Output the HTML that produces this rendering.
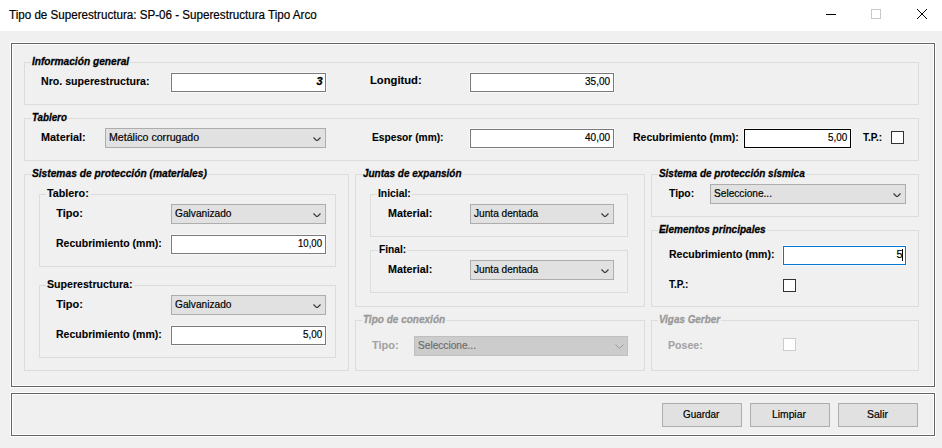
<!DOCTYPE html>
<html><head><meta charset="utf-8"><title>Tipo de Superestructura</title><style>
*{box-sizing:border-box}
body{margin:0;width:942px;height:448px;background:#f0f0f0;position:relative;overflow:hidden;font-family:"Liberation Sans",sans-serif}
.tbar{position:absolute;left:0;top:0;width:942px;height:31px;background:#fff}
.panel{position:absolute;border:1px solid #fff;box-shadow:inset 0 0 0 1px #646464, inset 0 0 0 2px #fff}
.gb{position:absolute;border:1px solid #dcdcdc}
.tb{position:absolute;border:1px solid #7a7a7a;background:#fff;box-shadow:0 0 0 1px #f8f8f8}
.cb{position:absolute;border:1px solid #adadad;background:#e1e1e1}
.chk{position:absolute;width:13px;height:13px;border:1px solid #333;background:#fff}
.btn{position:absolute;border:1px solid #adadad;background:#e1e1e1}
.t{position:absolute;white-space:nowrap;line-height:14px}
</style></head>
<body>
<div class="tbar"></div>
<div class="panel" style="left:10px;top:42px;width:926px;height:346px"></div><div class="panel" style="left:10px;top:392px;width:926px;height:45px"></div><div class="gb" style="left:24px;top:62px;width:895px;height:43px;border-color:#dcdcdc"></div><div class="tb" style="left:171px;top:73px;width:155px;height:19px;border-color:#7a7a7a;background:#fff"></div><div class="tb" style="left:470px;top:73px;width:144px;height:19px;border-color:#7a7a7a;background:#fff"></div><div class="gb" style="left:24px;top:118px;width:895px;height:43px;border-color:#dcdcdc"></div><div class="cb" style="left:105px;top:128px;width:221px;height:20px;border-color:#adadad;background:#e1e1e1"><svg width="8" height="4" style="position:absolute;right:4px;top:8px" viewBox="0 0 8 4"><path d="M0.5 0.5 L3.5 3.5 L4.5 3.5 L7.5 0.5" fill="none" stroke="#3a3a3a" stroke-width="1.2"/></svg></div><div class="tb" style="left:470px;top:129px;width:144px;height:19px;border-color:#7a7a7a;background:#fff"></div><div class="tb" style="left:744px;top:129px;width:107px;height:19px;border-color:#000;background:#fff"></div><div class="chk" style="left:891px;top:131px;border-color:#333;background:#fff"></div><div class="gb" style="left:24px;top:174px;width:325px;height:197px;border-color:#dcdcdc"></div><div class="gb" style="left:39px;top:194px;width:297px;height:73px;border-color:#dcdcdc"></div><div class="cb" style="left:171px;top:204px;width:155px;height:20px;border-color:#adadad;background:#e1e1e1"><svg width="8" height="4" style="position:absolute;right:4px;top:8px" viewBox="0 0 8 4"><path d="M0.5 0.5 L3.5 3.5 L4.5 3.5 L7.5 0.5" fill="none" stroke="#3a3a3a" stroke-width="1.2"/></svg></div><div class="tb" style="left:171px;top:235px;width:155px;height:19px;border-color:#7a7a7a;background:#fff"></div><div class="gb" style="left:39px;top:285px;width:297px;height:73px;border-color:#dcdcdc"></div><div class="cb" style="left:171px;top:295px;width:155px;height:20px;border-color:#adadad;background:#e1e1e1"><svg width="8" height="4" style="position:absolute;right:4px;top:8px" viewBox="0 0 8 4"><path d="M0.5 0.5 L3.5 3.5 L4.5 3.5 L7.5 0.5" fill="none" stroke="#3a3a3a" stroke-width="1.2"/></svg></div><div class="tb" style="left:171px;top:326px;width:155px;height:19px;border-color:#7a7a7a;background:#fff"></div><div class="gb" style="left:355px;top:174px;width:290px;height:133px;border-color:#dcdcdc"></div><div class="gb" style="left:370px;top:194px;width:258px;height:43px;border-color:#dcdcdc"></div><div class="cb" style="left:470px;top:204px;width:144px;height:20px;border-color:#adadad;background:#e1e1e1"><svg width="8" height="4" style="position:absolute;right:4px;top:8px" viewBox="0 0 8 4"><path d="M0.5 0.5 L3.5 3.5 L4.5 3.5 L7.5 0.5" fill="none" stroke="#3a3a3a" stroke-width="1.2"/></svg></div><div class="gb" style="left:370px;top:250px;width:258px;height:43px;border-color:#dcdcdc"></div><div class="cb" style="left:470px;top:260px;width:144px;height:20px;border-color:#adadad;background:#e1e1e1"><svg width="8" height="4" style="position:absolute;right:4px;top:8px" viewBox="0 0 8 4"><path d="M0.5 0.5 L3.5 3.5 L4.5 3.5 L7.5 0.5" fill="none" stroke="#3a3a3a" stroke-width="1.2"/></svg></div><div class="gb" style="left:651px;top:174px;width:268px;height:43px;border-color:#dcdcdc"></div><div class="cb" style="left:710px;top:184px;width:196px;height:20px;border-color:#adadad;background:#e1e1e1"><svg width="8" height="4" style="position:absolute;right:4px;top:8px" viewBox="0 0 8 4"><path d="M0.5 0.5 L3.5 3.5 L4.5 3.5 L7.5 0.5" fill="none" stroke="#3a3a3a" stroke-width="1.2"/></svg></div><div class="gb" style="left:651px;top:230px;width:268px;height:77px;border-color:#dcdcdc"></div><div class="tb" style="left:783px;top:246px;width:123px;height:19px;border-color:#0078d7;background:#fff"></div><div class="chk" style="left:783px;top:279px;border-color:#333;background:#fff"></div><div class="gb" style="left:355px;top:320px;width:290px;height:51px;border-color:#dcdcdc"></div><div class="cb" style="left:414px;top:336px;width:214px;height:20px;border-color:#bfbfbf;background:#cccccc"><svg width="9" height="5" style="position:absolute;right:3px;top:7px" viewBox="0 0 9 5"><path d="M0.5 0.5 L4.5 4.5 L8.5 0.5" fill="none" stroke="#9a9a9a" stroke-width="1"/></svg></div><div class="gb" style="left:651px;top:320px;width:268px;height:51px;border-color:#dcdcdc"></div><div class="chk" style="left:783px;top:338px;border-color:#cccccc;background:#fff"></div><div class="btn" style="left:662px;top:403px;width:80px;height:24px"></div><div class="btn" style="left:750px;top:403px;width:80px;height:24px"></div><div class="btn" style="left:838px;top:403px;width:80px;height:24px"></div>
<div style="position:absolute;left:826px;top:14px;width:10px;height:1px;background:#000"></div>
<div style="position:absolute;left:871px;top:9px;width:10px;height:10px;border:1px solid #c8c8c8"></div>
<svg style="position:absolute;left:917px;top:9px" width="10" height="10" viewBox="0 0 10 10" shape-rendering="crispEdges" fill="#000"><rect x="0" y="0" width="1" height="1"/><rect x="9" y="0" width="1" height="1"/><rect x="1" y="1" width="1" height="1"/><rect x="8" y="1" width="1" height="1"/><rect x="2" y="2" width="1" height="1"/><rect x="7" y="2" width="1" height="1"/><rect x="3" y="3" width="1" height="1"/><rect x="6" y="3" width="1" height="1"/><rect x="4" y="4" width="1" height="1"/><rect x="5" y="4" width="1" height="1"/><rect x="5" y="5" width="1" height="1"/><rect x="4" y="5" width="1" height="1"/><rect x="6" y="6" width="1" height="1"/><rect x="3" y="6" width="1" height="1"/><rect x="7" y="7" width="1" height="1"/><rect x="2" y="7" width="1" height="1"/><rect x="8" y="8" width="1" height="1"/><rect x="1" y="8" width="1" height="1"/><rect x="9" y="9" width="1" height="1"/><rect x="0" y="9" width="1" height="1"/></svg>
<div style="position:absolute;left:902px;top:249px;width:1px;height:12px;background:#000"></div>

<span class="t" style="left:9.30px;top:8px;color:#000;font-size:12px;transform:scaleX(0.9686);transform-origin:0 0;-webkit-text-stroke-width:0.2px;">Tipo de Superestructura: SP-06 - Superestructura Tipo Arco</span><span class="t" style="left:32.00px;top:54px;color:#000;font-weight:bold;font-style:italic;font-size:11px;transform:scaleX(0.9245);transform-origin:0 0;-webkit-text-stroke-width:0.3px;background:#f0f0f0;padding:0 1px;margin-left:-1px;">Información general</span><span class="t" style="left:41.20px;top:74px;color:#000;font-weight:bold;font-size:11px;transform:scaleX(0.9643);transform-origin:0 0;-webkit-text-stroke-width:0.1px;">Nro. superestructura:</span><span class="t" style="left:316.40px;top:74px;color:#000;font-weight:bold;font-style:italic;font-size:11px;-webkit-text-stroke-width:0.3px;">3</span><span class="t" style="left:370.00px;top:73px;color:#000;font-weight:bold;font-size:11px;transform:scaleX(1.0200);transform-origin:0 0;-webkit-text-stroke-width:0.1px;">Longitud:</span><span class="t" style="left:584.60px;top:74px;color:#000;font-size:11px;transform:scaleX(0.9111);transform-origin:0 0;-webkit-text-stroke-width:0.2px;">35,00</span><span class="t" style="left:32.20px;top:110px;color:#000;font-weight:bold;font-style:italic;font-size:11px;transform:scaleX(0.8901);transform-origin:0 0;-webkit-text-stroke-width:0.3px;background:#f0f0f0;padding:0 1px;margin-left:-1px;">Tablero</span><span class="t" style="left:41.00px;top:130px;color:#000;font-weight:bold;font-size:11px;transform:scaleX(0.9867);transform-origin:0 0;-webkit-text-stroke-width:0.1px;">Material:</span><span class="t" style="left:109.40px;top:130px;color:#000;font-size:11px;transform:scaleX(0.9638);transform-origin:0 0;-webkit-text-stroke-width:0.2px;">Metálico corrugado</span><span class="t" style="left:372.00px;top:130px;color:#000;font-weight:bold;font-size:11px;transform:scaleX(0.9286);transform-origin:0 0;-webkit-text-stroke-width:0.1px;">Espesor (mm):</span><span class="t" style="left:584.90px;top:130px;color:#000;font-size:11px;transform:scaleX(0.9111);transform-origin:0 0;-webkit-text-stroke-width:0.2px;">40,00</span><span class="t" style="left:632.60px;top:130px;color:#000;font-weight:bold;font-size:11px;transform:scaleX(0.9564);transform-origin:0 0;-webkit-text-stroke-width:0.1px;">Recubrimiento (mm):</span><span class="t" style="left:828.00px;top:130px;color:#000;font-size:11px;transform:scaleX(0.8955);transform-origin:0 0;-webkit-text-stroke-width:0.2px;">5,00</span><span class="t" style="left:863.00px;top:130px;color:#000;font-weight:bold;font-size:11px;transform:scaleX(0.9048);transform-origin:0 0;-webkit-text-stroke-width:0.1px;">T.P.:</span><span class="t" style="left:32.00px;top:166px;color:#000;font-weight:bold;font-style:italic;font-size:11px;transform:scaleX(0.9291);transform-origin:0 0;-webkit-text-stroke-width:0.3px;background:#f0f0f0;padding:0 1px;margin-left:-1px;">Sistemas de protección (materiales)</span><span class="t" style="left:47.00px;top:186px;color:#000;font-weight:bold;font-size:11px;transform:scaleX(0.9811);transform-origin:0 0;-webkit-text-stroke-width:0.1px;background:#f0f0f0;padding:0 1px;margin-left:-1px;">Tablero:</span><span class="t" style="left:56.20px;top:206px;color:#000;font-weight:bold;font-size:11px;-webkit-text-stroke-width:0.1px;">Tipo:</span><span class="t" style="left:174.90px;top:206px;color:#000;font-size:11px;transform:scaleX(0.9232);transform-origin:0 0;-webkit-text-stroke-width:0.2px;">Galvanizado</span><span class="t" style="left:56.40px;top:236px;color:#000;font-weight:bold;font-size:11px;transform:scaleX(0.9564);transform-origin:0 0;-webkit-text-stroke-width:0.1px;">Recubrimiento (mm):</span><span class="t" style="left:297.80px;top:236px;color:#000;font-size:11px;transform:scaleX(0.8716);transform-origin:0 0;-webkit-text-stroke-width:0.2px;">10,00</span><span class="t" style="left:47.00px;top:277px;color:#000;font-weight:bold;font-size:11px;transform:scaleX(0.9648);transform-origin:0 0;-webkit-text-stroke-width:0.1px;background:#f0f0f0;padding:0 1px;margin-left:-1px;">Superestructura:</span><span class="t" style="left:56.20px;top:297px;color:#000;font-weight:bold;font-size:11px;-webkit-text-stroke-width:0.1px;">Tipo:</span><span class="t" style="left:174.90px;top:297px;color:#000;font-size:11px;transform:scaleX(0.9232);transform-origin:0 0;-webkit-text-stroke-width:0.2px;">Galvanizado</span><span class="t" style="left:56.40px;top:327px;color:#000;font-weight:bold;font-size:11px;transform:scaleX(0.9564);transform-origin:0 0;-webkit-text-stroke-width:0.1px;">Recubrimiento (mm):</span><span class="t" style="left:302.80px;top:327px;color:#000;font-size:11px;transform:scaleX(0.8955);transform-origin:0 0;-webkit-text-stroke-width:0.2px;">5,00</span><span class="t" style="left:363.00px;top:166px;color:#000;font-weight:bold;font-style:italic;font-size:11px;transform:scaleX(0.9064);transform-origin:0 0;-webkit-text-stroke-width:0.3px;background:#f0f0f0;padding:0 1px;margin-left:-1px;">Juntas de expansión</span><span class="t" style="left:378.00px;top:186px;color:#000;font-weight:bold;font-size:11px;transform:scaleX(0.9429);transform-origin:0 0;-webkit-text-stroke-width:0.1px;background:#f0f0f0;padding:0 1px;margin-left:-1px;">Inicial:</span><span class="t" style="left:387.80px;top:206px;color:#000;font-weight:bold;font-size:11px;transform:scaleX(0.9778);transform-origin:0 0;-webkit-text-stroke-width:0.1px;">Material:</span><span class="t" style="left:474.00px;top:206px;color:#000;font-size:11px;transform:scaleX(0.9200);transform-origin:0 0;-webkit-text-stroke-width:0.2px;">Junta dentada</span><span class="t" style="left:378.50px;top:242px;color:#000;font-weight:bold;font-size:11px;transform:scaleX(0.9280);transform-origin:0 0;-webkit-text-stroke-width:0.1px;background:#f0f0f0;padding:0 1px;margin-left:-1px;">Final:</span><span class="t" style="left:387.80px;top:262px;color:#000;font-weight:bold;font-size:11px;transform:scaleX(0.9778);transform-origin:0 0;-webkit-text-stroke-width:0.1px;">Material:</span><span class="t" style="left:474.00px;top:262px;color:#000;font-size:11px;transform:scaleX(0.9200);transform-origin:0 0;-webkit-text-stroke-width:0.2px;">Junta dentada</span><span class="t" style="left:659.00px;top:166px;color:#000;font-weight:bold;font-style:italic;font-size:11px;transform:scaleX(0.9068);transform-origin:0 0;-webkit-text-stroke-width:0.3px;background:#f0f0f0;padding:0 1px;margin-left:-1px;">Sistema de protección sísmica</span><span class="t" style="left:668.50px;top:186px;color:#000;font-weight:bold;font-size:11px;transform:scaleX(0.9434);transform-origin:0 0;-webkit-text-stroke-width:0.1px;">Tipo:</span><span class="t" style="left:714.00px;top:186px;color:#000;font-size:11px;transform:scaleX(0.9206);transform-origin:0 0;-webkit-text-stroke-width:0.2px;">Seleccione...</span><span class="t" style="left:659.00px;top:222px;color:#000;font-weight:bold;font-style:italic;font-size:11px;transform:scaleX(0.9145);transform-origin:0 0;-webkit-text-stroke-width:0.3px;background:#f0f0f0;padding:0 1px;margin-left:-1px;">Elementos principales</span><span class="t" style="left:668.50px;top:247px;color:#000;font-weight:bold;font-size:11px;transform:scaleX(0.9528);transform-origin:0 0;-webkit-text-stroke-width:0.1px;">Recubrimiento (mm):</span><span class="t" style="left:896.60px;top:247px;color:#000;font-size:11px;-webkit-text-stroke-width:0.2px;">5</span><span class="t" style="left:668.50px;top:277px;color:#000;font-weight:bold;font-size:11px;transform:scaleX(0.9105);transform-origin:0 0;-webkit-text-stroke-width:0.1px;">T.P.:</span><span class="t" style="left:363.00px;top:312px;color:#999999;font-weight:bold;font-style:italic;font-size:11px;transform:scaleX(0.9110);transform-origin:0 0;-webkit-text-stroke-width:0.3px;background:#f0f0f0;padding:0 1px;margin-left:-1px;">Tipo de conexión</span><span class="t" style="left:372.00px;top:338px;color:#a3a3a3;font-weight:bold;font-size:11px;-webkit-text-stroke-width:0.1px;">Tipo:</span><span class="t" style="left:418.00px;top:338px;color:#6d6d6d;font-size:11px;transform:scaleX(0.9206);transform-origin:0 0;-webkit-text-stroke-width:0.2px;">Seleccione...</span><span class="t" style="left:659.00px;top:312px;color:#999999;font-weight:bold;font-style:italic;font-size:11px;transform:scaleX(0.8986);transform-origin:0 0;-webkit-text-stroke-width:0.3px;background:#f0f0f0;padding:0 1px;margin-left:-1px;">Vigas Gerber</span><span class="t" style="left:668.00px;top:338px;color:#a3a3a3;font-weight:bold;font-size:11px;transform:scaleX(0.9612);transform-origin:0 0;-webkit-text-stroke-width:0.1px;">Posee:</span><span class="t" style="left:683.00px;top:407px;color:#000;font-size:11px;transform:scaleX(0.9024);transform-origin:0 0;-webkit-text-stroke-width:0.2px;">Guardar</span><span class="t" style="left:771.80px;top:407px;color:#000;font-size:11px;transform:scaleX(0.9384);transform-origin:0 0;-webkit-text-stroke-width:0.2px;">Limpiar</span><span class="t" style="left:867.00px;top:407px;color:#000;font-size:11px;transform:scaleX(0.9545);transform-origin:0 0;-webkit-text-stroke-width:0.2px;">Salir</span>
</body></html>
